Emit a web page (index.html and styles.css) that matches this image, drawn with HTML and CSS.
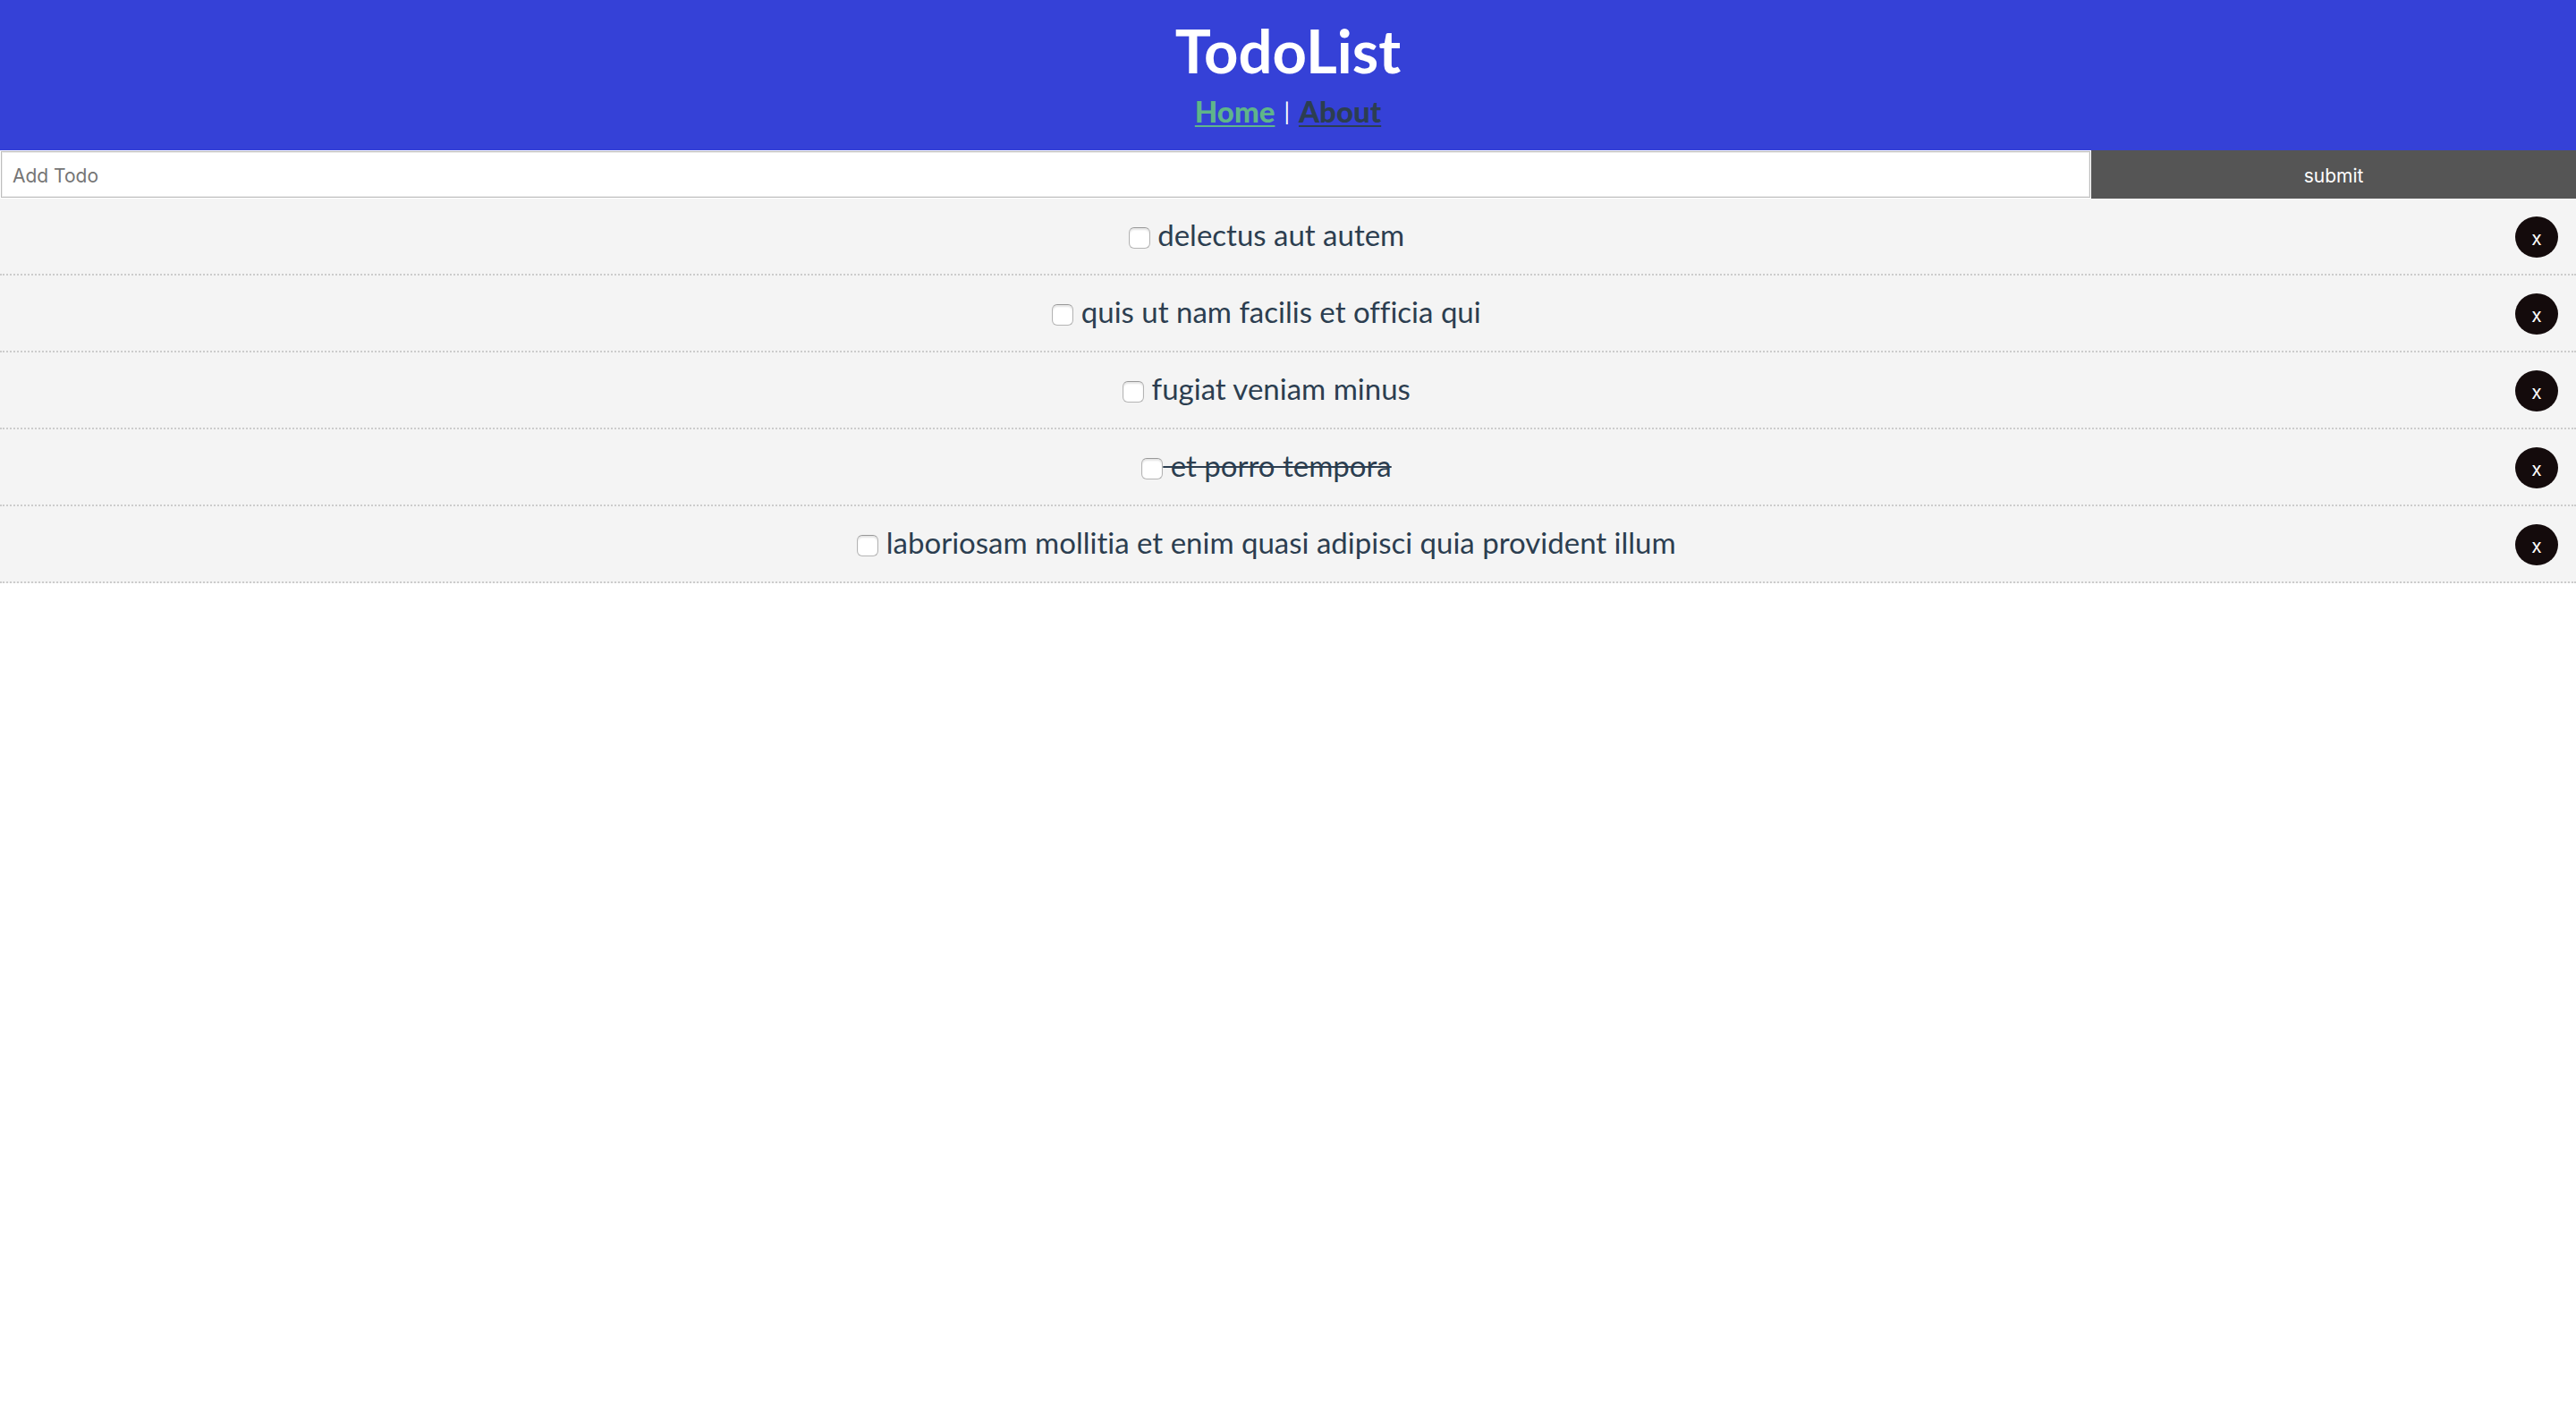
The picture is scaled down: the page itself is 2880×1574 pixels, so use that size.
FILE: index.html
```html
<!DOCTYPE html>
<html lang="en">
<head>
<meta charset="utf-8">
<title>TodoList</title>
<link rel="stylesheet" href="styles.css">
</head>
<body>
<header class="header">
  <h1 class="header-title">TodoList</h1>
  <nav class="nav"><a class="nav-link nav-link-active" href="#home">Home</a><span class="nav-divider">|</span><a class="nav-link" href="#about">About</a></nav>
</header>
<main>
  <form class="add-form">
    <input class="add-input" type="text" name="title" placeholder="Add Todo" aria-label="Add Todo">
    <button class="add-submit" type="submit">submit</button>
  </form>
  <ul class="todos">
    <li class="todo">
      <label class="todo-label"><input class="todo-check" type="checkbox"><span class="todo-text"> delectus aut autem</span></label>
      <button class="todo-delete" type="button">x</button>
    </li>
    <li class="todo">
      <label class="todo-label"><input class="todo-check" type="checkbox"><span class="todo-text"> quis ut nam facilis et officia qui</span></label>
      <button class="todo-delete" type="button">x</button>
    </li>
    <li class="todo">
      <label class="todo-label"><input class="todo-check" type="checkbox"><span class="todo-text"> fugiat veniam minus</span></label>
      <button class="todo-delete" type="button">x</button>
    </li>
    <li class="todo todo-done">
      <label class="todo-label"><input class="todo-check" type="checkbox"><span class="todo-text"> et porro tempora</span></label>
      <button class="todo-delete" type="button">x</button>
    </li>
    <li class="todo">
      <label class="todo-label"><input class="todo-check" type="checkbox"><span class="todo-text"> laboriosam mollitia et enim quasi adipisci quia provident illum</span></label>
      <button class="todo-delete" type="button">x</button>
    </li>
  </ul>
</main>
</body>
</html>
```
FILE: styles.css
```css
* {
  box-sizing: border-box;
  margin: 0;
  padding: 0;
}

body {
  background: #fff;
  color: #2c3e50;
  font-family: Lato, "Open Sans", sans-serif;
  font-size: 33px;
  font-variant-ligatures: none;
  line-height: 40px;
}

.header {
  padding: 16px 20px 24px;
  background: #3541d7;
  color: #fff;
  text-align: center;
}

.header-title {
  padding-bottom: 8px;
  font-size: 67px;
  font-weight: 700;
  line-height: 80px;
}

.nav {
  display: flex;
  justify-content: center;
  gap: 10px;
}

.nav-link {
  color: #2c3e50;
  font-size: 33px;
  font-weight: 900;
  text-decoration-thickness: 2px;
  text-underline-offset: 3px;
  text-decoration-skip-ink: none;
}

.nav-link-active {
  color: #5fb58a;
}

.nav-divider {
  font-size: 26px;
}

.add-form {
  display: flex;
}

.add-input {
  flex: 10 1 0;
  min-width: 0;
  height: 54px;
  padding: 2px 13px 0;
  border: 1px solid #fff;
  background: #fff;
  box-shadow: inset 0 0 0 1px #bdbdbd, inset 0 0 0 2px #efefef;
  font-family: Inter, sans-serif;
  font-size: 21px;
}

.add-input::placeholder {
  color: #757575;
}

.add-submit {
  flex: 2 1 0;
  padding: 2px 40px 0;
  border: 0;
  background: #555;
  color: #fff;
  font-family: Inter, sans-serif;
  font-size: 21px;
}

.todos {
  list-style: none;
}

.todo {
  display: flex;
  align-items: flex-start;
  padding: 20px 20px 18px;
  border-bottom: 2px dotted #ccc;
  background: #f4f4f4;
}

.todo-label {
  flex: 1;
  height: 46px;
  text-align: center;
}

.todo-check {
  appearance: none;
  width: 24px;
  height: 24px;
  border: 1px solid #b4b4b4;
  border-top-color: #999;
  border-radius: 6px;
  background: #fff;
  box-shadow: inset 0 2px 2px #e4e4e4;
  vertical-align: -3px;
}

.todo-text {
  white-space: pre;
  text-decoration-thickness: 2px;
}

.todo-done .todo-text {
  text-decoration-line: line-through;
}

.todo-delete {
  width: 48px;
  height: 46px;
  padding-top: 3px;
  border: 0;
  border-radius: 50%;
  background: #140b0c;
  color: #fff;
  font-family: Inter, sans-serif;
  font-size: 21px;
}
```
